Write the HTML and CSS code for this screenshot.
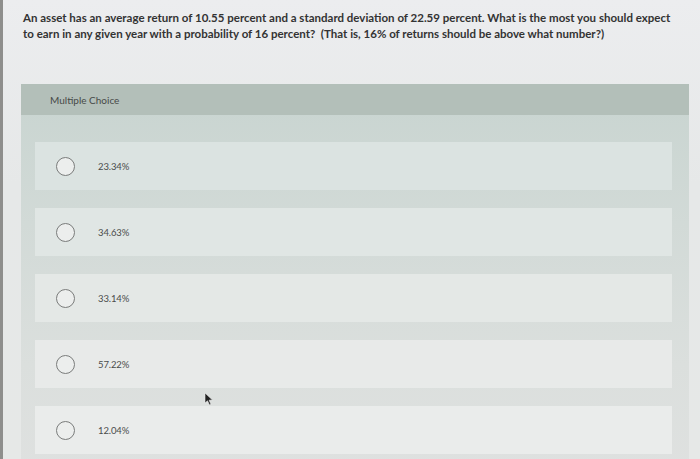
FILE: index.html
```html
<!DOCTYPE html>
<html>
<head>
<meta charset="utf-8">
<link rel="stylesheet" href="styles.css">
</head>
<body>
<div class="screen">
  <p class="question"><span class="line">An asset has an average return of 10.55 percent and a standard deviation of 22.59 percent. What is the most you should expect</span> <span class="line">to earn in any given year with a probability of 16 percent? &nbsp;(That is, 16% of returns should be above what number?)</span></p>
  <div class="panel">
    <div class="panel-head">Multiple Choice</div>
    <div class="options">
      <div class="option"><span class="radio"></span><span class="label">23.34%</span></div>
      <div class="option"><span class="radio"></span><span class="label">34.63%</span></div>
      <div class="option"><span class="radio"></span><span class="label">33.14%</span></div>
      <div class="option"><span class="radio"></span><span class="label">57.22%</span></div>
      <div class="option"><span class="radio"></span><span class="label">12.04%</span></div>
    </div>
  </div>
  <svg class="cursor" width="10" height="14" viewBox="0 0 10 14"><path d="M1 1 L1 11 L3.5 8.8 L5.5 13 L7 12.3 L5.1 8.2 L8.5 8 Z" fill="#222" stroke="#eee" stroke-width="0.6"/></svg>
</div>
</body>
</html>
```

FILE: styles.css
```css
html, body {
  margin: 0;
  padding: 0;
}
body {
  width: 700px;
  height: 459px;
  overflow: hidden;
  background: #e6e8e8;
}
.screen {
  position: relative;
  height: 459px;
  box-sizing: border-box;
  border-left: 3px solid #8e8e8c;
  background: linear-gradient(180deg, #ecedef 0%, #e6e8e8 40%, #e6e8e7 100%);
  padding-top: 10px;
  font-family: Lato, "Open Sans", sans-serif;
}
.question {
  margin: 0 0 0 20px;
  font-size: 11.5px;
  line-height: 16px;
  font-weight: 700;
  color: #333;
}
.question .line {
  display: block;
  white-space: nowrap;
}
.panel {
  margin: 42px 0 0 18px;
  width: 668px;
  height: 400px;
  background: linear-gradient(180deg, #c8d4d0 0%, #d2dad7 35%, #dbdfdd 70%, #dfe1e0 100%);
}
.panel-head {
  height: 31px;
  box-sizing: border-box;
  padding: 11px 0 0 29px;
  background: #b3bfb9;
  font-size: 10px;
  line-height: 11px;
  color: #474a48;
}
.options {
  display: flex;
  flex-direction: column;
  gap: 18px;
  padding: 27px 17px 0 14px;
}
.option {
  height: 48px;
  display: flex;
  align-items: center;
}
.option:nth-child(1) { background: #dbe3e1; }
.option:nth-child(2) { background: #e0e6e4; }
.option:nth-child(3) { background: #e4e8e6; }
.option:nth-child(4) { background: #e8eae9; }
.option:nth-child(5) { background: #eaeceb; }
.radio {
  width: 17px;
  height: 17px;
  border: 1.6px solid #7a7c7b;
  border-radius: 50%;
  background: #eceeed;
  margin-left: 21px;
  flex: none;
}
.label {
  margin-left: 23px;
  font-size: 9.5px;
  color: #4a4c4b;
  letter-spacing: -0.1px;
}
.cursor {
  position: absolute;
  left: 201px;
  top: 392px;
}
```
